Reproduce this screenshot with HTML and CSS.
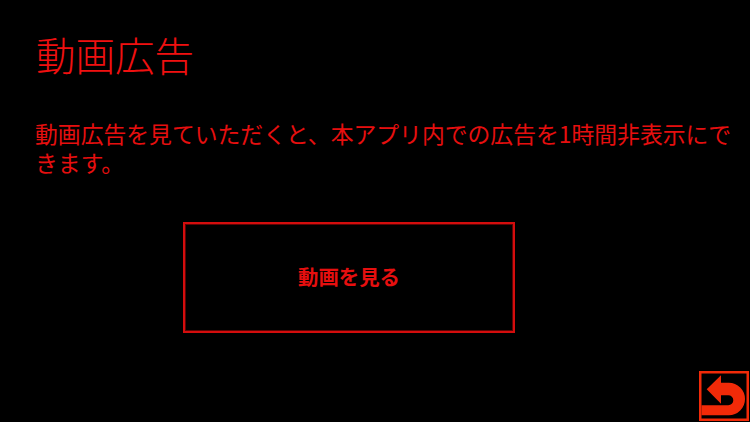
FILE: index.html
```html
<!DOCTYPE html>
<html lang="ja">
<head>
<meta charset="utf-8">
<title>動画広告</title>
<link rel="stylesheet" href="styles.css">
</head>
<body>
<main class="screen">
  <h1 class="title">動画広告</h1>
  <p class="desc">動画広告を見ていただくと、本アプリ内での広告を1時間非表示にできます。</p>
  <button class="watch" type="button">動画を見る</button>
  <button class="back" type="button" aria-label="戻る">
    <svg viewBox="0 0 50 50" width="50" height="50" aria-hidden="true">
      <rect x="1.25" y="1.25" width="47.5" height="47.5" fill="#000" stroke="#f22a08" stroke-width="2.5"/>
      <path d="M7.7 18.3 L22 4.3 V11.7 H29.7 A16.3 16.3 0 0 1 29.7 44.3 H2.5 V34.3 H29.3 A5 5 0 0 0 29.3 24.3 H22 V32.7 Z" fill="#f22a08"/>
    </svg>
  </button>
</main>
</body>
</html>
```
FILE: styles.css
```css
* { box-sizing: border-box; }
html, body { margin: 0; height: 100%; background: #000; }
.screen {
  position: relative;
  width: 750px;
  height: 422px;
  overflow: hidden;
  padding: 31px 0 0 36px;
  background: #000;
  color: #f01010;
  font-family: "Noto Sans CJK JP", "Noto Sans CJK SC", sans-serif;
}
.title {
  margin: 0;
  font-size: 39.5px;
  line-height: 46px;
  font-weight: 300;
}
.desc {
  margin: 42px 0 0 -1px;
  width: 704px;
  font-size: 22.82px;
  line-height: 29px;
  font-weight: 400;
  color: #e60f0f;
}
.watch {
  display: block;
  width: 332px;
  height: 111px;
  margin: 45px 0 0 147px;
  padding: 0 0 2px;
  background: #000;
  border: 2px solid #d40d0d;
  box-shadow: inset 0 0 0 1px #5a0505;
  color: #e60f0f;
  font: 700 20.4px/1 "Noto Sans CJK JP", "Noto Sans CJK SC", sans-serif;
}
.back {
  position: absolute;
  right: 1px;
  bottom: 1px;
  width: 50px;
  height: 50px;
  padding: 0;
  border: 0;
  background: none;
  display: block;
}
.back svg { display: block; }
```
